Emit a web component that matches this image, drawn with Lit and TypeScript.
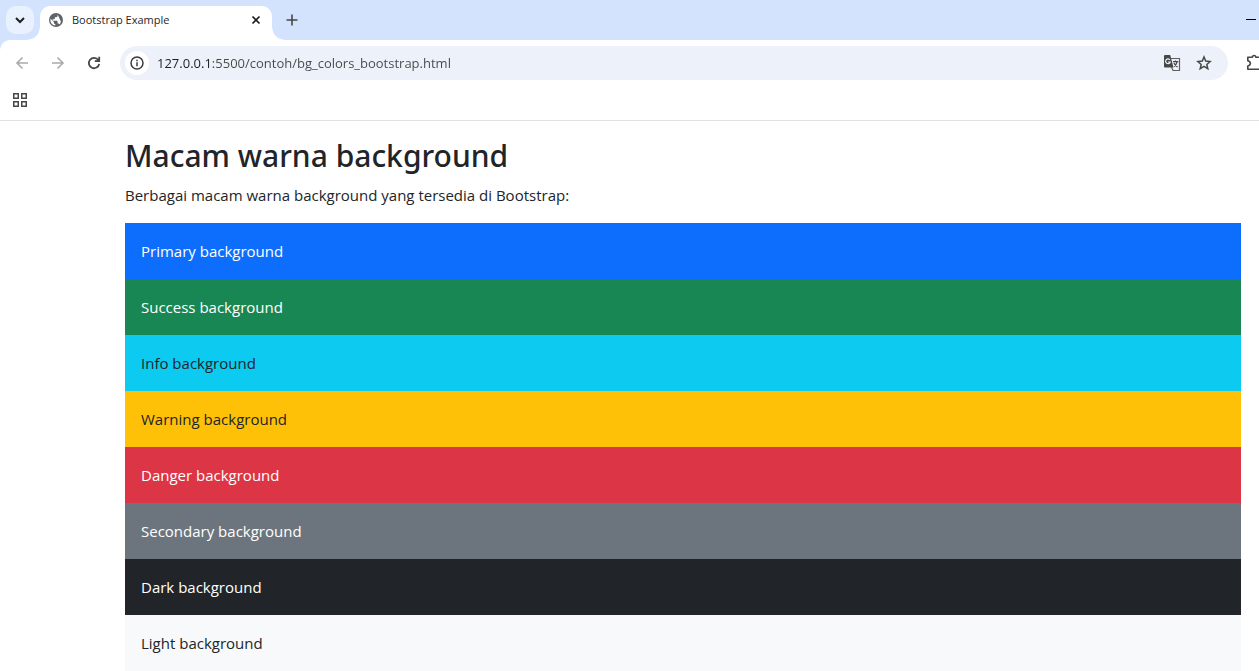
import { LitElement, html, css, svg } from "lit";
import { customElement, property } from "lit/decorators.js";

const sans = css`"Segoe UI", "Open Sans", "Noto Sans", sans-serif`;

const icons = {
  chevron: svg`<path d="M1 1.5 5 5.5 9 1.5" transform="translate(3 4.5)" fill="none" stroke="#1f1f1f" stroke-width="2"/>`,
  globe: svg`<circle cx="8" cy="8" r="7" fill="#5f6368"/><path d="M9.6 2.6v1.2c0 .8-.6 1.4-1.4 1.4H6.8v1.4c0 .4-.3.7-.7.7H4.7v1.4h4.2c.4 0 .7.3.7.7v2.1h.7c.6 0 1.1.4 1.3 1 .7-.8 1.200-2 1.200-3.200M7.300 13.500v-1.400c-.8 0-1.400-.6-1.400-1.400V10L2.600 6.700c-.1.400-.2.900-.2 1.300 0 2.900 2.100 5.200 4.900 5.500z" fill="#fff"/>`,
  close: svg`<path d="m4.500 4.500 7 7m0-7-7 7" stroke="#1f1f1f" stroke-width="1.700"/>`,
  plus: svg`<path d="M8 2.500v11M2.500 8h11" stroke="#474747" stroke-width="1.600"/>`,
  back: svg`<path d="M14 8H3M8.500 2.500 3 8l5.500 5.500" fill="none" stroke="#ababab" stroke-width="1.600"/>`,
  forward: svg`<path d="M2 8h11M7.500 2.500 13 8l-5.500 5.500" fill="none" stroke="#ababab" stroke-width="1.600"/>`,
  reload: svg`<path d="M12.300 5A5.200 5.200 0 1 0 13.200 8.800M13.200 1.800v4.400H8.800" fill="none" stroke="#474747" stroke-width="1.800"/>`,
  info: svg`<circle cx="8" cy="8" r="6" fill="none" stroke="#3c3c3c" stroke-width="1.500"/><path d="M8 7.200v4M8 4.700v1.500" stroke="#3c3c3c" stroke-width="1.500"/>`,
  star: svg`<path d="m8 2 1.700 4.100 4.400.4-3.300 2.900 1 4.300L8 11.400l-3.800 2.300 1-4.300-3.300-2.900 4.400-.4z" fill="none" stroke="#474747" stroke-width="1.500"/>`,
  apps: svg`<path d="M1.750 1.750h4.500v4.500h-4.500zM9.750 1.750h4.500v4.500h-4.500zM1.750 9.750h4.500v4.500h-4.500zM9.750 9.750h4.500v4.500h-4.500z" fill="none" stroke="#474747" stroke-width="1.500"/>`,
  minimize: svg`<path d="M3 7.500h10" stroke="#000" stroke-width="1"/>`,
};

@customElement("ui-icon")
export class UiIcon extends LitElement {
  @property() name: keyof typeof icons = "close";
  static styles = css`
    :host { display: block; width: 16px; height: 16px; flex: none; }
    svg { display: block; }
  `;
  render() {
    return html`<svg width="16" height="16" viewBox="0 0 16 16" aria-hidden="true">${icons[this.name]}</svg>`;
  }
}

@customElement("browser-chrome")
export class BrowserChrome extends LitElement {
  static styles = css`
    :host { display: block; overflow: hidden; border-bottom: 1px solid #dfe1e5; font-family: ${sans}; color: #1f1f1f; }
    button { display: grid; place-items: center; flex: none; border: 0; padding: 0; margin: 0; background: none; font: inherit; }
    .strip { display: flex; height: 40px; padding-left: 6px; box-sizing: border-box; background: #d3e2fd; }
    .search { width: 28px; height: 28px; margin: 6px 6px 0 0; border-radius: 10px; background: #e9f1fe; }
    .tab { position: relative; display: flex; align-items: center; box-sizing: border-box; width: 232px; height: 34px; margin-top: 6px; padding: 0 8px 6px; gap: 8px; border-radius: 10px 10px 0 0; background: #fff; font-size: 11px; line-height: 16px; }
    .tab::before, .tab::after { content: ""; position: absolute; bottom: 0; width: 12px; height: 12px; }
    .tab::before { left: -12px; background: radial-gradient(circle at 0 0, transparent 11px, #fff 12px); }
    .tab::after { right: -12px; background: radial-gradient(circle at 100% 0, transparent 11px, #fff 12px); }
    .title { flex: 1; white-space: nowrap; }
    .new { width: 28px; height: 28px; margin: 6px 0 0 6px; }
    .window { width: 16px; height: 28px; margin: 6px 0 0 auto; }
    .corner { background: #d3e2fd; }
    .bar { display: flex; align-items: center; height: 34px; padding: 6px 0 6px 8px; border-radius: 10px 0 0 0; background: #fff; }
    .nav { display: flex; gap: 8px; margin-right: 12px; }
    .nav button { width: 28px; height: 28px; }
    .omnibox { display: flex; align-items: center; flex: 1; min-width: 0; height: 34px; padding: 0 16px 0 5px; box-sizing: border-box; border-radius: 17px; background: #ecf1fa; }
    .site { width: 24px; height: 24px; margin-right: 8px; border-radius: 50%; background: #fff; }
    .url { flex: 1; min-width: 0; height: 24px; border: 0; outline: 0; padding: 0; font: 13px/24px ${sans}; color: transparent; background: linear-gradient(90deg, #1f1f1f 54px, #474747 54px); background-clip: text; -webkit-background-clip: text; }
    .actions { display: flex; align-items: center; gap: 15px; }
    .ext { width: 20px; height: 28px; margin: 0 -6px 0 17px; }
    .bookmarks { display: flex; align-items: center; box-sizing: border-box; height: 34px; padding: 0 12px 6px; background: #fff; }
  `;
  render() {
    return html`
      <div class="strip">
        <button class="search" aria-label="Search tabs"><ui-icon name="chevron"></ui-icon></button>
        <div class="tab">
          <ui-icon name="globe"></ui-icon>
          <span class="title">Bootstrap Example</span>
          <button aria-label="Close tab"><ui-icon name="close"></ui-icon></button>
        </div>
        <button class="new" aria-label="New tab"><ui-icon name="plus"></ui-icon></button>
        <button class="window" aria-label="Minimize"><ui-icon name="minimize"></ui-icon></button>
      </div>
      <div class="corner">
        <div class="bar">
          <div class="nav">
            <button aria-label="Back"><ui-icon name="back"></ui-icon></button>
            <button aria-label="Forward"><ui-icon name="forward"></ui-icon></button>
            <button aria-label="Reload"><ui-icon name="reload"></ui-icon></button>
          </div>
          <div class="omnibox">
            <button class="site" aria-label="Site information"><ui-icon name="info"></ui-icon></button>
            <input class="url" type="text" aria-label="Address" spellcheck="false" value="127.0.0.1:5500/contoh/bg_colors_bootstrap.html" />
            <div class="actions">
              <button aria-label="Translate">
                <svg width="18" height="18" viewBox="0 0 18 18" aria-hidden="true">
                  <path d="M8 4.500h8.500v12H10L8.500 13" fill="none" stroke="#5f5f5f" stroke-width="1.200"/>
                  <path d="M2 1h5.200l3.300 12.500H2a1 1 0 0 1-1-1V2a1 1 0 0 1 1-1z" fill="#474747"/>
                  <path d="M7 5.900A2.400 2.400 0 1 0 7.300 8H5" fill="none" stroke="#ecf1fa" stroke-width="1.200"/>
                  <path d="M10 7.700h5.300M12.500 6.500v1.200M14.200 7.700c-.5 2-1.700 3.700-3.200 4.900M11 9c.8 1.700 2 3 3.500 4" fill="none" stroke="#474747" stroke-width="1.200"/>
                </svg>
              </button>
              <button aria-label="Bookmark this page"><ui-icon name="star"></ui-icon></button>
            </div>
          </div>
          <button class="ext" aria-label="Extensions">
            <svg width="20" height="20" viewBox="0 0 20 20" aria-hidden="true">
              <path d="M2.800 4.300H7.400C7.400 1.800 10.800 1.800 10.800 4.300H16V16.200H2.800V12.900C6.200 12 6.200 8.500 2.800 7.700z" fill="none" stroke="#474747" stroke-width="1.600" stroke-linejoin="round"/>
            </svg>
          </button>
        </div>
      </div>
      <div class="bookmarks">
        <button aria-label="Apps"><ui-icon name="apps"></ui-icon></button>
      </div>
    `;
  }
}

const swatches = ["Primary", "Success", "Info", "Warning", "Danger", "Secondary", "Dark", "Light"];

@customElement("app-root")
export class AppRoot extends LitElement {
  static styles = css`
    :host { display: block; background: #fff; color: #212529; font: 15px/24px ${sans}; }
    main { padding: 16px 18px 0 125px; }
    h2 { margin: 0 0 8px; font-family: "Segoe UI", "Noto Sans", sans-serif; font-size: 30px; line-height: 38px; font-weight: 500; }
    p { margin: 0; }
    .lead { margin-bottom: 16px; }
    .swatch { padding: 16px; color: #fff; }
    .primary { background: #0d6efd; }
    .success { background: #198754; }
    .info { background: #0dcaf0; color: #212529; }
    .warning { background: #ffc107; color: #212529; }
    .danger { background: #dc3545; }
    .secondary { background: #6c757d; }
    .dark { background: #212529; }
    .light { background: #f8f9fa; color: #212529; }
  `;
  render() {
    return html`
      <browser-chrome></browser-chrome>
      <main>
        <h2>Macam warna background</h2>
        <p class="lead">Berbagai macam warna background yang tersedia di Bootstrap:</p>
        ${swatches.map((s) => html`<p class="swatch ${s.toLowerCase()}">${s} background</p>`)}
      </main>
    `;
  }
}
